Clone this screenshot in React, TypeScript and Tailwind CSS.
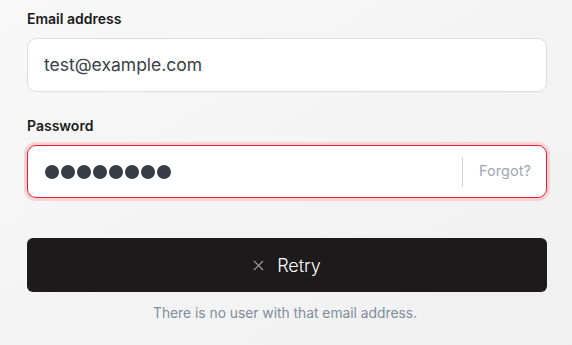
import React from "react";

export default function App() {
  return (
    <div
      className="w-[572px] h-[345px] overflow-hidden bg-gradient-to-br from-[#f8f8f8] to-[#f0f0f0] pl-[27px] pr-[25px] pt-[9px]"
      style={{ fontFamily: "Inter, 'Noto Sans', sans-serif" }}
    >
      <div className="flex flex-col">
        <label className="text-[14px] leading-[20px] font-semibold text-[#1a1a1a]">Email address</label>
        <div className="mt-[9px] h-[54px] rounded-[9px] border border-[#dcdcdc] bg-white flex items-center px-[16px]">
          <span className="text-[17.5px] text-[#3a3f47]">test@example.com</span>
        </div>

        <label className="mt-[24px] text-[14px] leading-[20px] font-semibold text-[#1a1a1a]">Password</label>
        <div className="mt-[9px] h-[53px] rounded-[9px] border border-[#ee1a33] ring-[3px] ring-[#f8d3d6] bg-white flex items-center pl-[17px] pr-[15px]">
          <div className="flex items-center gap-[2px] flex-1">
            {Array.from({ length: 8 }).map((_, i) => (
              <span key={i} className="block w-[14px] h-[14px] rounded-full bg-[#373c44]" />
            ))}
          </div>
          <div className="w-px h-[30px] bg-[#d4d4d4] mr-[16px]" />
          <span className="text-[14.6px] text-[#a1a7b0]">Forgot?</span>
        </div>

        <button className="mt-[40px] h-[54px] rounded-[6px] bg-[#1d1a1b] flex items-center justify-center gap-[13px]">
          <svg width="11" height="11" viewBox="0 0 11 11" fill="none" stroke="#9b9b9b" strokeWidth="1.2">
            <path d="M1 1L10 10M10 1L1 10" />
          </svg>
          <span className="text-[18px] font-light text-white">Retry</span>
        </button>

        <p className="mt-[11px] pr-[4px] text-center text-[13.8px] leading-[20px] text-[#7f8c9b]">
          There is no user with that email address.
        </p>
      </div>
    </div>
  );
}
